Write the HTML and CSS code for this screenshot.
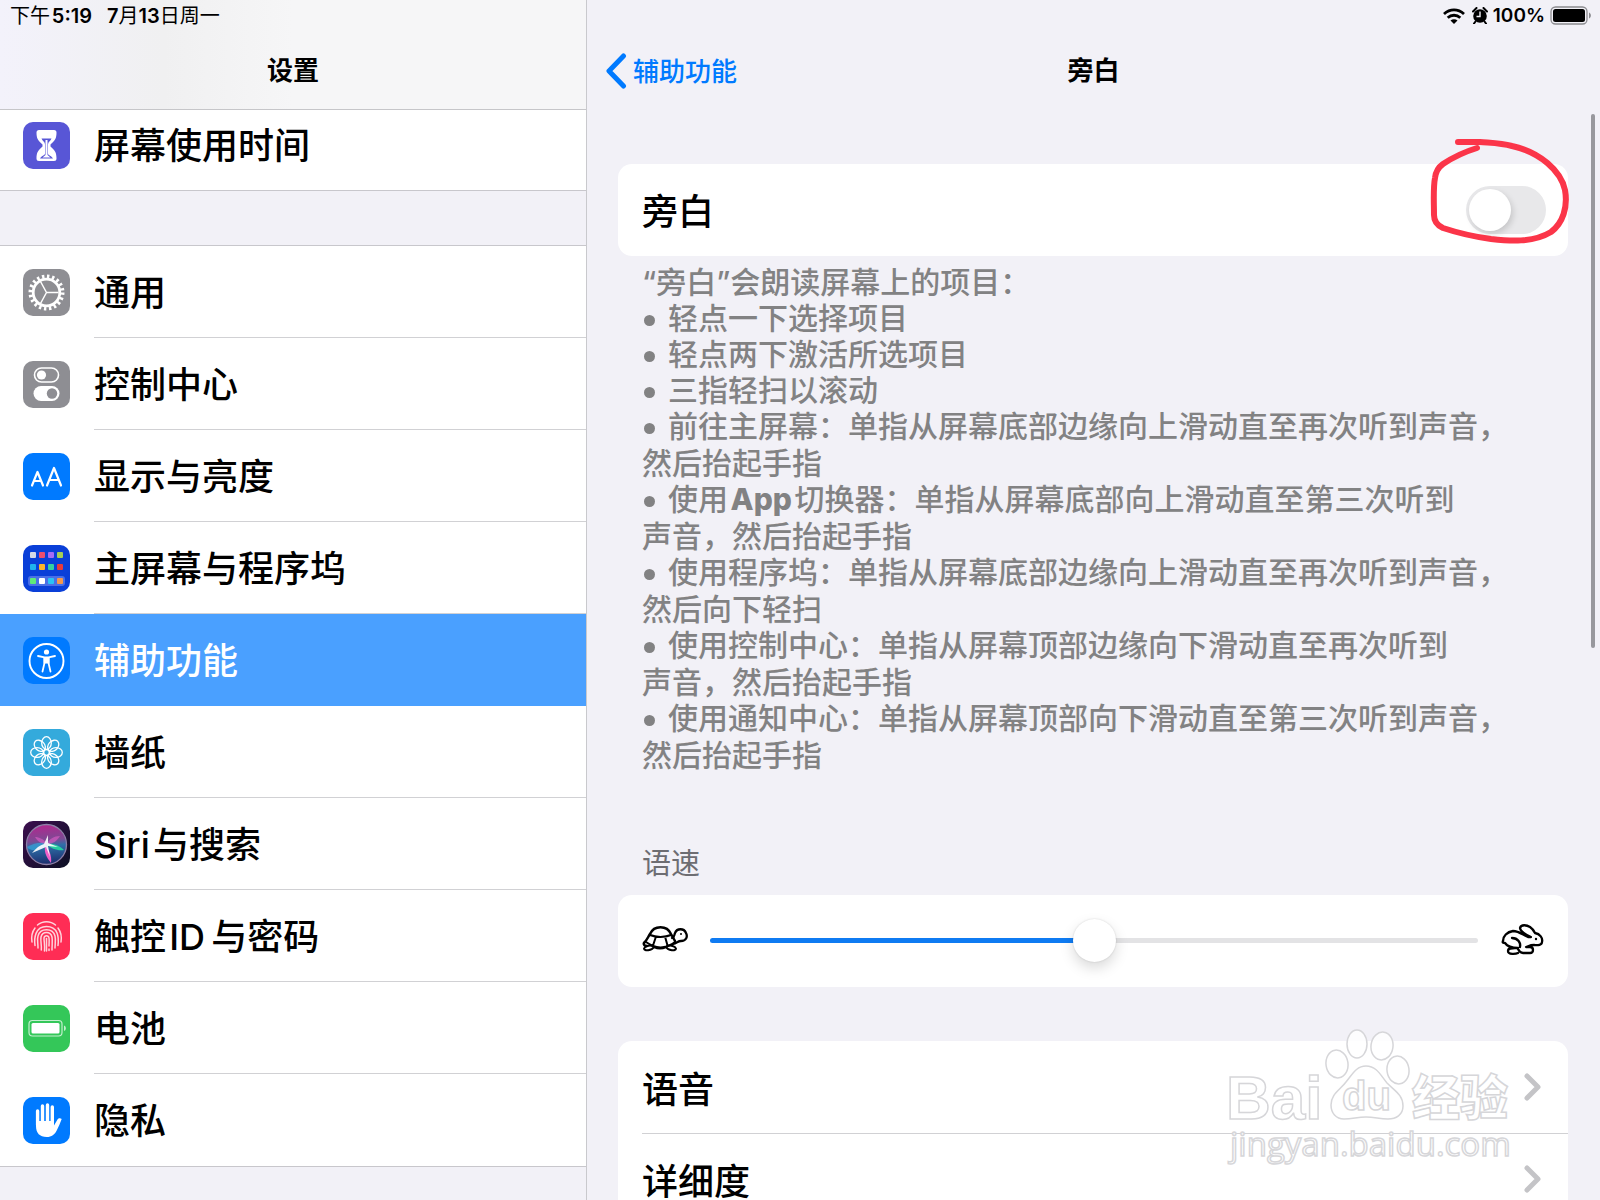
FILE: index.html
```html
<!DOCTYPE html>
<html lang="zh-CN">
<head>
  <meta charset="UTF-8">
  <meta name="viewport" content="width=device-width, initial-scale=1.0">
  <title>设置 - 旁白</title>
  <link rel="stylesheet" href="styles.css">
</head>
<body>
  <aside class="sidebar">
    <header class="top">
      <div class="status">
        <span>下午&#8202;<b>5:19</b></span>
        <span><b>7</b>月<b>13</b>日周一</span>
      </div>
      <h1 class="title">设置</h1>
    </header>
    <nav class="menu">
      <ul class="group first">
        <li><a href="#">
          <svg class="icon" viewBox="0 0 47 47">
            <rect width="47" height="47" rx="10" fill="#5856d6"/>
            <path d="M16 8h15q2.500 0 2.500 2.500c0 6-1.500 8-6 12v2c4.500 4 6 6 6 12q0 2.500-2.500 2.500H16q-2.500 0-2.500-2.500c0-6 1.500-8 6-12v-2c-4.500-4-6-6-6-12Q13.500 8 16 8z" fill="#fff"/>
            <path d="M18.500 16.500h10c-1 2.500-3.500 3.500-3.500 6v9c0 2 4 2.500 5 5H17c1-2.500 5-3 5-5v-9c0-2.500-2.500-3.500-3.500-6z" fill="#5856d6"/>
            <path d="M22.500 18h2v15l3 2.500h-8l3-2.500z" fill="#fff"/>
          </svg>
          <span>屏幕使用时间</span></a></li>
      </ul>
      <ul class="group">
        <li><a href="#">
          <svg class="icon" viewBox="0 0 47 47">
            <rect width="47" height="47" rx="10" fill="#8e8e93"/>
            <g fill="none" stroke="#fff">
              <circle cx="23.500" cy="23.500" r="16" stroke-width="4" stroke-dasharray="2.400 2.627"/>
              <circle cx="23.500" cy="23.500" r="13.300" stroke-width="2.800"/>
              <path d="M23.500 23.500h12M23.500 23.500l-6-11M23.500 23.500l-6 11" stroke-width="1.500"/>
            </g>
          </svg>
          <span>通用</span></a></li>
        <li><a href="#">
          <svg class="icon" viewBox="0 0 47 47">
            <rect width="47" height="47" rx="10" fill="#8e8e93"/>
            <rect x="11.500" y="7" width="24" height="14" rx="7" fill="none" stroke="#fff" stroke-width="1.600"/>
            <circle cx="18.500" cy="14" r="4.600" fill="#fff"/>
            <rect x="10.500" y="25" width="26" height="15" rx="7.500" fill="#fff"/>
            <circle cx="29" cy="32.500" r="5.200" fill="#8e8e93"/>
          </svg>
          <span>控制中心</span></a></li>
        <li><a href="#">
          <svg class="icon" viewBox="0 0 47 47">
            <rect width="47" height="47" rx="10" fill="#007aff"/>
            <g fill="none" stroke="#fff" stroke-width="2.200" stroke-linecap="round" stroke-linejoin="round">
              <path d="M9 32.500L14.500 19l5.500 13.500M11 28h7"/>
              <path d="M24 32.500L31 15l7 17.500M26.500 27h9"/>
            </g>
          </svg>
          <span>显示与亮度</span></a></li>
        <li><a href="#">
          <svg class="icon" viewBox="0 0 47 47">
            <rect width="47" height="47" rx="10" fill="#0a3fd8"/>
            <rect x="5" y="31" width="37" height="10" rx="3" fill="#4a6fe6"/>
            <g>
              <rect x="7" y="7" width="6" height="6" rx="1" fill="#d5d9e6"/>
              <rect x="16" y="7" width="6" height="6" rx="1" fill="#ee4e6e"/>
              <rect x="25" y="7" width="6" height="6" rx="1" fill="#a66bf5"/>
              <rect x="34" y="7" width="6" height="6" rx="1" fill="#a5cf55"/>
              <rect x="7" y="19" width="6" height="6" rx="1" fill="#1fb2ee"/>
              <rect x="16" y="19" width="6" height="6" rx="1" fill="#fbb62a"/>
              <rect x="25" y="19" width="6" height="6" rx="1" fill="#36cfa0"/>
              <rect x="34" y="19" width="6" height="6" rx="1" fill="#e93a3c"/>
              <rect x="7" y="33" width="6" height="6" rx="1" fill="#5fea78"/>
              <rect x="16" y="33" width="6" height="6" rx="1" fill="#fff"/>
              <rect x="25" y="33" width="6" height="6" rx="1" fill="#29c3f5"/>
              <rect x="34" y="33" width="6" height="6" rx="1" fill="#f5984a"/>
            </g>
          </svg>
          <span>主屏幕与程序坞</span></a></li>
        <li class="active"><a href="#" aria-current="page">
          <svg class="icon" viewBox="0 0 47 47">
            <rect width="47" height="47" rx="10" fill="#007aff"/>
            <circle cx="23.500" cy="24" r="17" fill="none" stroke="#fff" stroke-width="1.900"/>
            <circle cx="23.500" cy="15" r="2.600" fill="#fff"/>
            <path d="M15 19l6.500 1.300h4L32 19" fill="none" stroke="#fff" stroke-width="1.800" stroke-linecap="round"/>
            <path d="M25.500 21v5l2 8.500M21.500 21v5l-2 8.500" fill="none" stroke="#fff" stroke-width="1.800" stroke-linecap="round"/>
            <path d="M20.500 20h6v6.500h-6z" fill="#fff"/>
          </svg>
          <span>辅助功能</span></a></li>
        <li><a href="#">
          <svg class="icon" viewBox="0 0 47 47">
            <rect width="47" height="47" rx="10" fill="#34aadc"/>
            <g fill="none" stroke="#fff" stroke-width="1.300">
              <ellipse cx="23.500" cy="14" rx="4.800" ry="6.300"/>
              <ellipse cx="23.500" cy="14" rx="4.800" ry="6.300" transform="rotate(45 23.500 23.500)"/>
              <ellipse cx="23.500" cy="14" rx="4.800" ry="6.300" transform="rotate(90 23.500 23.500)"/>
              <ellipse cx="23.500" cy="14" rx="4.800" ry="6.300" transform="rotate(135 23.500 23.500)"/>
              <ellipse cx="23.500" cy="14" rx="4.800" ry="6.300" transform="rotate(180 23.500 23.500)"/>
              <ellipse cx="23.500" cy="14" rx="4.800" ry="6.300" transform="rotate(225 23.500 23.500)"/>
              <ellipse cx="23.500" cy="14" rx="4.800" ry="6.300" transform="rotate(270 23.500 23.500)"/>
              <ellipse cx="23.500" cy="14" rx="4.800" ry="6.300" transform="rotate(315 23.500 23.500)"/>
              <circle cx="23.500" cy="23.500" r="2.800"/>
            </g>
          </svg>
          <span>墙纸</span></a></li>
        <li><a href="#">
          <svg class="icon" viewBox="0 0 47 47">
            <defs>
              <linearGradient id="siri-bg" x1="0" y1="0" x2="1" y2="1">
                <stop offset="0" stop-color="#3c0f4e"/>
                <stop offset="1" stop-color="#0c1024"/>
              </linearGradient>
              <linearGradient id="siri-orb" x1="0.400" y1="0" x2="0.500" y2="1">
                <stop offset="0" stop-color="#b3268e"/>
                <stop offset="0.400" stop-color="#7c4a94"/>
                <stop offset="0.550" stop-color="#2e6fa8"/>
                <stop offset="1" stop-color="#1c2b6b"/>
              </linearGradient>
            </defs>
            <rect width="47" height="47" rx="10" fill="url(#siri-bg)"/>
            <circle cx="23.500" cy="23.500" r="20" fill="url(#siri-orb)" stroke="#8c7fa6" stroke-width="1.300"/>
            <path d="M4 26c6-4 13-5 20-4l-5 5c-6 3-12 3-15-1z" fill="#35a4d8" opacity="0.700"/>
            <path d="M24 23c6-1 13 2 17 6-6 1-13-1-17-6z" fill="#27d9a0" opacity="0.900"/>
            <path d="M22 25c4 3 7 9 6 17-4-5-7-10-6-17z" fill="#f060c8"/>
            <path d="M12 16c4 0 9 2 12 7-5 0-9-2-12-7zM24 23c2-5 7-8 13-8-3 5-7 8-13 8z" fill="#d65ac0" opacity="0.700"/>
            <path d="M9 32c4-5 8-8 12-9l4-9v8l10 4-10-1 2 11-4-10z" fill="#fff" opacity="0.900"/>
          </svg>
          <span>Siri&#8202;与搜索</span></a></li>
        <li><a href="#">
          <svg class="icon" viewBox="0 0 47 47">
            <rect width="47" height="47" rx="10" fill="#ff2d55"/>
            <g fill="none" stroke="#ffd3dc" stroke-width="1.500" stroke-linecap="round">
              <path d="M14.500 12c5-4.500 13-4.500 18 0"/>
              <path d="M9 29c-1-6 0-10 3-14M38 29c1-6 0-10-3-14"/>
              <path d="M12 32.500c-1-7 0-19 11.500-19S36 24 35 32.500"/>
              <path d="M15 35c0-5-1-9 0-12 2-8.500 15-8.500 17 0 1 4 0 8 0 12"/>
              <path d="M18.300 37c.5-5-1-9-.3-13 1.500-6 9.500-6 11 0 .7 4 0 8 0 13"/>
              <path d="M21.500 38c.5-6-.5-9-.5-13 .5-3 4.500-3 5 0 .5 3 0 5 0 8M26 36v1.500"/>
              <path d="M23.500 25.500V38"/>
            </g>
          </svg>
          <span>触控&#8202;ID&#8201;与密码</span></a></li>
        <li><a href="#">
          <svg class="icon" viewBox="0 0 47 47">
            <rect width="47" height="47" rx="10" fill="#34c759"/>
            <rect x="6" y="15.500" width="33" height="15.500" rx="3.500" fill="none" stroke="#c3efce" stroke-width="1.200"/>
            <rect x="8.500" y="18" width="28" height="10.500" rx="1.500" fill="#fff"/>
            <path d="M41 20.500c2.500.8 2.500 4.700 0 5.500z" fill="#c3efce"/>
          </svg>
          <span>电池</span></a></li>
        <li><a href="#">
          <svg class="icon" viewBox="0 0 47 47">
            <rect width="47" height="47" rx="10" fill="#007aff"/>
            <g fill="none" stroke="#fff" stroke-width="3.400" stroke-linecap="round">
              <path d="M14.600 14v14M19.500 9v16M24.500 8v16M29.300 10v16"/>
            </g>
            <path d="M13 24h18v4.500l3.500-6c1-1.500 3-1.500 4.200-.5-1.500 4-3.200 8-5 11.500-2 4-5 6.500-10 6.500-7 0-10.700-4-10.700-11z" fill="#fff"/>
          </svg>
          <span>隐私</span></a></li>
      </ul>
    </nav>
  </aside>

  <main class="detail">
    <header class="top">
      <div class="status right">
        <svg class="wifi" viewBox="0 0 22 16">
          <g fill="none" stroke="#000" stroke-width="2.800">
            <path d="M1 6c6-5.500 14-5.500 20 0"/>
            <path d="M4.700 9.700c3.600-3.300 9-3.300 12.600 0"/>
          </g>
          <path d="M7.500 12.500c2-1.800 5-1.800 7 0L11 16z"/>
        </svg>
        <svg class="alarm" viewBox="0 0 16 17">
          <circle cx="8" cy="9" r="6.800"/>
          <path d="M1 4.500L4.500 1M15 4.500L11.500 1M3.500 14.500l-1.500 2M12.500 14.500l1.500 2" stroke="#000" stroke-width="2" stroke-linecap="round"/>
          <path d="M8 4.500v5H4.500" fill="none" stroke="#f2f1f7" stroke-width="1.400"/>
        </svg>
        <span>100%</span>
        <svg class="battery" viewBox="0 0 42 20">
          <rect x="1" y="1" width="36" height="17" rx="4.500" fill="none" stroke="#8b8b8f" stroke-width="1.300"/>
          <rect x="3" y="3" width="32" height="13" rx="2.500"/>
          <path d="M39 6.500c2.500.8 2.500 5.200 0 6z" fill="#8b8b8f"/>
        </svg>
      </div>
      <div class="navbar">
        <a class="back" href="#">
          <svg viewBox="0 0 22 36"><path d="M18.500 3L4 18l14.500 15" fill="none" stroke="#007aff" stroke-width="5" stroke-linecap="round" stroke-linejoin="round"/></svg>
          <span>辅助功能</span>
        </a>
        <h2 class="title">旁白</h2>
      </div>
    </header>

    <section class="card">
      <div class="row">
        <label for="voiceover">旁白</label>
        <div class="switch">
          <input type="checkbox" id="voiceover" role="switch">
          <svg class="mark" viewBox="0 0 144 112">
            <path d="M31 7h22c12 1 21 1 32 4 28 6 49 25 53 44 3 17-2 33-14 42-18 11-42 9-60 7-22-3-36-7-48-11q-9-4-9-13c0-12-1-27 1-37q1-9 8-14c9-6 21-12 34-16" fill="none" stroke="#fb3549" stroke-width="6" stroke-linecap="round" stroke-linejoin="round"/>
          </svg>
        </div>
      </div>
    </section>

    <div class="help">
      <p>“旁白”会朗读屏幕上的项目：</p>
      <ul>
        <li>轻点一下选择项目</li>
        <li>轻点两下激活所选项目</li>
        <li>三指轻扫以滚动</li>
        <li class="long">前往主屏幕：单指从屏幕底部边缘向上滑动直至再次听到声音，<br>然后抬起手指</li>
        <li class="long">使用&#8202;<b>App</b>&#8202;切换器：单指从屏幕底部向上滑动直至第三次听到<br>声音，然后抬起手指</li>
        <li class="long">使用程序坞：单指从屏幕底部边缘向上滑动直至再次听到声音，<br>然后向下轻扫</li>
        <li class="long">使用控制中心：单指从屏幕顶部边缘向下滑动直至再次听到<br>声音，然后抬起手指</li>
        <li class="long">使用通知中心：单指从屏幕顶部向下滑动直至第三次听到声音，<br>然后抬起手指</li>
      </ul>
    </div>

    <label class="caption" for="speed">语速</label>
    <section class="card">
      <div class="row speed">
        <svg class="animal" viewBox="0 0 46 32">
          <g fill="none" stroke="#000" stroke-width="2" stroke-linecap="round" stroke-linejoin="round">
            <path d="M2 19c3-3 4-6 6-9 4-9 17-9 21 0l4 7" stroke-width="2.500"/>
            <path d="M8 11c6 2.500 15 2.500 21 0M14 12.500l-3 9M23 12.500l2.500 9M4 18c3 2 5 3 7 4 5 2 10 2 15 0 3-1 5-2 7-4"/>
            <path d="M2 19c-1 2 1 3 3 3M30 14c3-1 2-3 3-5 2-5 9-5 11 0 2 4 0 8-5 8-3 0-4 2-8 3" stroke-width="2.300"/>
            <path d="M11 22c-4-1-8 0-9 2.500 0 3 8 2 10-1.500M25 22c4-1 8 0 9 2.500 0 3-8 2-10-1.500M12 23c4 2 8 2 12 0"/>
          </g>
          <circle cx="39" cy="10" r="1"/>
        </svg>
        <input type="range" id="speed" min="0" max="100" value="50">
        <svg class="animal" viewBox="0 0 44 32">
          <g fill="none" stroke="#000" stroke-width="2.300" stroke-linecap="round" stroke-linejoin="round">
            <path d="M2 17c0-5 4-9 10-10 6 0 10 4 15 6l3 0c-5-2-11-6-11-9 1-4 7-3 10-1 3 2 4 4 5 6 5 1 8 5 7 9 0 3-4 3.500-8 3-4 0-5 1-8 2h4c4 0 4 6 0 6h-7c-3 0-4-2-5-4"/>
            <path d="M2 17c-1 2 1 2 2 2 2 3 5 5 13 5M14 24c-4 0-7 0-7 3 0 4 8 3 10 2M11 14c6 0 9 5 8 9"/>
          </g>
          <circle cx="35" cy="15" r="1.200"/>
        </svg>
      </div>
    </section>

    <section class="card more">
      <a class="row" href="#">语音
        <svg class="chevron" viewBox="0 0 18 28"><path d="M3 3l11 11L3 25" fill="none" stroke="#c4c4c7" stroke-width="5" stroke-linecap="round" stroke-linejoin="round"/></svg></a>
      <a class="row" href="#">详细度
        <svg class="chevron" viewBox="0 0 18 28"><path d="M3 3l11 11L3 25" fill="none" stroke="#c4c4c7" stroke-width="5" stroke-linecap="round" stroke-linejoin="round"/></svg></a>
    </section>

    <div class="scrollbar"></div>
    <svg class="watermark" viewBox="0 0 300 150">
      <g fill="#fff" fill-opacity="0.850" stroke="#d6d6d9" stroke-width="1.500">
        <text x="6" y="95" class="wm-bai">Bai</text>
        <ellipse cx="117" cy="40" rx="11" ry="14" transform="rotate(-8 117 40)"/>
        <ellipse cx="137" cy="20" rx="10" ry="14"/>
        <ellipse cx="162" cy="22" rx="11" ry="14" transform="rotate(8 162 22)"/>
        <ellipse cx="178" cy="46" rx="11" ry="14" transform="rotate(-8 178 46)"/>
        <path d="M146 42c11 0 15 10 21 17 8 8 16 12 16 23 0 9-7 13-15 13-9 0-13-2-22-2s-13 2-22 2c-8 0-13-6-13-14 0-11 9-15 15-23 6-7 10-16 20-16z"/>
        <text x="122" y="86" class="wm-du">du</text>
        <text x="192" y="91" class="wm-jy">经验</text>
        <text x="10" y="132" class="wm-url">jingyan.baidu.com</text>
      </g>
    </svg>
  </main>
</body>
</html>
```
FILE: styles.css
```css
* {
  box-sizing: border-box;
}
body {
  margin: 0;
  height: 100vh;
  display: grid;
  grid-template-columns: 587fr 1013fr;
  overflow: hidden;
  background-color: #f2f1f7;
  color: #000;
  font-family: Inter, "Noto Sans CJK SC", sans-serif;
  font-size: 36px;
  font-weight: 500;
}
h1, h2, p, ul {
  margin: 0;
  padding: 0;
}
ul {
  list-style: none;
}
a {
  color: inherit;
  text-decoration: none;
}
svg {
  display: block;
  flex: none;
}

/* Top bars */
.top {
  height: 110px;
}
.status {
  display: flex;
  align-items: center;
  gap: 15px;
  height: 31px;
  padding: 0 10px;
  font-size: 20px;
  font-weight: 400;
  line-height: 30px;
}
.status b {
  font-weight: 600;
}
.status.right {
  justify-content: flex-end;
  gap: 5px;
  padding-right: 8px;
  font-size: 19px;
  font-weight: 600;
}
.wifi {
  width: 22px;
  height: 16px;
  margin-right: 2px;
}
.alarm {
  width: 16px;
  height: 17px;
}
.battery {
  width: 42px;
  height: 20px;
}
.title {
  font-size: 26px;
  font-weight: 700;
  line-height: 80px;
  text-align: center;
}

/* Sidebar */
.sidebar {
  overflow: hidden;
  border-right: 1px solid #c9c9cd;
}
.sidebar .top {
  position: relative;
  z-index: 1;
  border-bottom: 1px solid #c6c6c9;
  background: linear-gradient(90deg, #f3f2fb, #f0f0f1 28%, #f6f6f7 50%);
}
.menu {
  margin-top: -11px;
}
.group {
  border-top: 1px solid #c8c7cc;
  border-bottom: 1px solid #c8c7cc;
  background-color: #fff;
}
.group + .group {
  margin-top: 54px;
}
.group a {
  display: flex;
  align-items: center;
  height: 92px;
  padding-left: 23px;
}
.group.first a {
  height: 90px;
}
.group span {
  flex: 1;
  height: 92px;
  margin-left: 24px;
  padding-top: 2px;
  border-bottom: 1px solid #d1d1d4;
  line-height: 90px;
}
.group li:last-child span,
.group .active span {
  border-bottom-color: transparent;
}
.group .active {
  background-color: #4aa0ff;
  color: #fff;
}
.icon {
  width: 47px;
  height: 47px;
}

/* Detail */
.detail {
  position: relative;
  overflow: hidden;
  padding: 0 32px 0 31px;
}
.detail .top {
  margin: 0 -32px 54px -31px;
}
.navbar {
  display: grid;
  grid-template-columns: 1fr auto 1fr;
  align-items: center;
}
.back {
  display: flex;
  align-items: center;
  gap: 6px;
  padding-left: 18px;
  color: #007aff;
  font-size: 26px;
}
.back span {
  padding-bottom: 4px;
}
.back svg {
  width: 22px;
  height: 36px;
}
.card {
  border-radius: 14px;
  background-color: #fff;
}
.row {
  display: flex;
  align-items: center;
  justify-content: space-between;
  height: 92px;
  padding: 0 22px 0 24px;
}
.row label {
  padding-bottom: 2px;
}
.switch {
  position: relative;
  display: flex;
}
.switch input {
  appearance: none;
  width: 80px;
  height: 48px;
  margin: 0;
  border-radius: 24px;
  background-color: #e8e8ea;
}
.switch input::before {
  content: "";
  display: block;
  width: 42px;
  height: 42px;
  margin: 3px;
  border-radius: 50%;
  background-color: #fff;
  box-shadow: 2px 3px 6px rgba(0, 0, 0, 0.15);
}
.switch input:checked {
  background-color: #34c759;
}
.switch input:checked::before {
  margin-left: 35px;
}
/* hand-drawn ring around the switch */
.mark {
  position: absolute;
  top: -51px;
  left: -39px;
  width: 144px;
  height: 112px;
  pointer-events: none;
}

.help {
  padding: 8px 24px 0;
  color: #828283;
  font-size: 30px;
  line-height: 36px;
}
.help b {
  font-weight: 800;
}
.help li::before {
  content: "";
  display: inline-block;
  width: 11px;
  height: 11px;
  margin: 0 13px 3px 2px;
  border-radius: 50%;
  background-color: #828283;
}
.help .long {
  margin-bottom: -1px;
  line-height: 37px;
}
.caption {
  display: block;
  margin: 73px 24px 13px;
  color: #6d6d72;
  font-size: 29px;
  font-weight: 400;
  line-height: 36px;
}
.speed {
  gap: 22px;
  padding-bottom: 2px;
}
.animal {
  width: 46px;
  height: 32px;
}
.speed input {
  appearance: none;
  flex: 1;
  height: 44px;
  margin: 0;
  background: none;
}
.speed input::-webkit-slider-runnable-track {
  height: 5px;
  border-radius: 3px;
  background: linear-gradient(90deg, #0f7bf2 50%, #e3e3e5 50%);
}
.speed input::-webkit-slider-thumb {
  appearance: none;
  width: 43px;
  height: 43px;
  margin-top: -19px;
  border-radius: 50%;
  background-color: #fff;
  box-shadow: 0 6px 14px rgba(0, 0, 0, 0.15), 0 0 2px rgba(0, 0, 0, 0.15);
}
.more {
  margin-top: 54px;
}
.more .row {
  padding: 0 26px 0 24px;
}
.more .row + .row {
  position: relative;
}
.more .row + .row::before {
  content: "";
  position: absolute;
  top: 0;
  left: 24px;
  right: 0;
  border-top: 1px solid #d1d1d4;
}
.chevron {
  width: 18px;
  height: 28px;
}
.scrollbar {
  position: absolute;
  top: 114px;
  right: 5px;
  width: 4px;
  height: 534px;
  border-radius: 2px;
  background-color: #98989d;
}

/* Watermark */
.watermark {
  position: absolute;
  right: 80px;
  bottom: 26px;
  width: 300px;
  height: 150px;
  pointer-events: none;
}
.wm-bai {
  font: 700 62px "Liberation Sans", sans-serif;
}
.wm-du {
  font: 700 40px "Liberation Sans", sans-serif;
}
.wm-jy {
  font: 900 48px "Noto Sans CJK SC", sans-serif;
}
.wm-url {
  font: 400 33px "Open Sans", sans-serif;
}
```
